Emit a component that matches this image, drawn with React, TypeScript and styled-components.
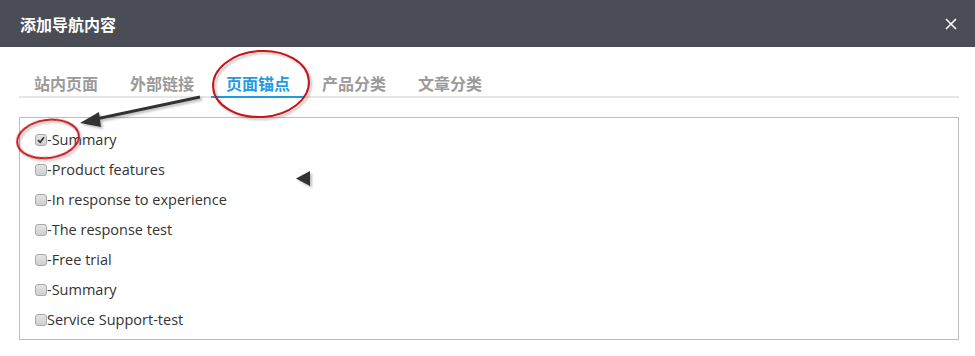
import React from 'react';
import styled, { createGlobalStyle } from 'styled-components';

const GlobalStyle = createGlobalStyle`
  html, body {
    margin: 0;
    padding: 0;
    background: #fff;
  }
  body {
    font-family: "Open Sans", "Noto Sans CJK SC", sans-serif;
  }
`;

const Dialog = styled.div`
  position: relative;
  width: 975px;
  height: 356px;
  background: #fff;
  overflow: hidden;
`;

const Header = styled.div`
  height: 47px;
  background: #4a4d55;
  display: flex;
  align-items: center;
  justify-content: space-between;
  padding: 0 17px 0 20px;
`;

const Title = styled.h1`
  margin: 0;
  font-family: "Noto Sans CJK SC", sans-serif;
  font-size: 16px;
  font-weight: 700;
  color: #fff;
`;

const CloseButton = styled.button`
  width: 14px;
  height: 14px;
  padding: 0;
  border: 0;
  background: transparent;
  display: flex;
  align-items: center;
  justify-content: center;
  cursor: pointer;
`;

const Body = styled.div`
  padding: 20px 16px 0 19px;
`;

const TabBar = styled.div`
  display: flex;
  gap: 2px;
  border-bottom: 2px solid #e6e6e6;
  height: 31px;
  box-sizing: border-box;
`;

const Tab = styled.div<{ $active?: boolean }>`
  width: 94px;
  box-sizing: border-box;
  display: flex;
  align-items: center;
  justify-content: center;
  font-family: "Noto Sans CJK SC", sans-serif;
  font-size: 16px;
  font-weight: 700;
  color: ${(p) => (p.$active ? '#1f9be4' : '#9a9a9a')};
  border-bottom: 2px solid ${(p) => (p.$active ? '#1f9be4' : 'transparent')};
  margin-bottom: -2px;
  padding-top: 2px;
  cursor: pointer;
`;

const ListBox = styled.div`
  margin-top: 19px;
  width: 940px;
  height: 223px;
  box-sizing: border-box;
  border: 1px solid #bcbcbc;
  padding: 7px 0 0 15px;
`;

const Item = styled.label`
  display: flex;
  align-items: center;
  height: 30px;
  font-size: 14.5px;
  color: #333;
  cursor: pointer;
`;

const Box = styled.span<{ $checked?: boolean }>`
  width: 12px;
  height: 12px;
  box-sizing: border-box;
  border: 1px solid #a9a9a9;
  border-radius: 3px;
  background: linear-gradient(#e4e4e4, #cfcfcf);
  display: flex;
  align-items: center;
  justify-content: center;
  flex-shrink: 0;
`;

const Label = styled.span`
  line-height: 1;
`;

const Annotations = styled.svg`
  position: absolute;
  left: 0;
  top: 0;
  pointer-events: none;
`;

const tabs = ['站内页面', '外部链接', '页面锚点', '产品分类', '文章分类'];

const items = [
  { label: '-Summary', checked: true },
  { label: '-Product features' },
  { label: '-In response to experience' },
  { label: '-The response test' },
  { label: '-Free trial' },
  { label: '-Summary' },
  { label: 'Service Support-test' },
];

export default function App() {
  return (
    <Dialog>
      <GlobalStyle />
      <Header>
        <Title>添加导航内容</Title>
        <CloseButton aria-label="close">
          <svg width="12" height="12" viewBox="0 0 12 12">
            <path d="M1 1L11 11M11 1L1 11" stroke="#fff" strokeWidth="1.6" />
          </svg>
        </CloseButton>
      </Header>
      <Body>
        <TabBar>
          {tabs.map((t, i) => (
            <Tab key={t} $active={i === 2}>
              {t}
            </Tab>
          ))}
        </TabBar>
        <ListBox>
          {items.map((it, i) => (
            <Item key={i}>
              <Box $checked={it.checked}>
                {it.checked && (
                  <svg width="8" height="8" viewBox="0 0 8 8">
                    <path d="M1 4.2L3.2 6.3L7 1.3" stroke="#333" strokeWidth="1.7" fill="none" />
                  </svg>
                )}
              </Box>
              <Label>{it.label}</Label>
            </Item>
          ))}
        </ListBox>
      </Body>
      <Annotations width="975" height="356" viewBox="0 0 975 356">
        <defs>
          <filter id="shadow" x="-20%" y="-20%" width="140%" height="140%">
            <feDropShadow dx="2" dy="2" stdDeviation="1.2" floodColor="#000" floodOpacity="0.25" />
          </filter>
        </defs>
        <g filter="url(#shadow)" fill="none" stroke="#c4141b" strokeWidth="2">
          <ellipse cx="261" cy="84" rx="48" ry="33" transform="rotate(-4 261 84)" />
          <ellipse cx="48" cy="139" rx="31" ry="19" transform="rotate(-8 48 139)" />
        </g>
        <g filter="url(#shadow)">
          <path d="M200 97L96 119" stroke="#333" strokeWidth="3" />
          <path d="M80 123L99 112L101 127Z" fill="#333" />
          <path d="M296 178.5L310 171V186Z" fill="#333" />
        </g>
      </Annotations>
    </Dialog>
  );
}
